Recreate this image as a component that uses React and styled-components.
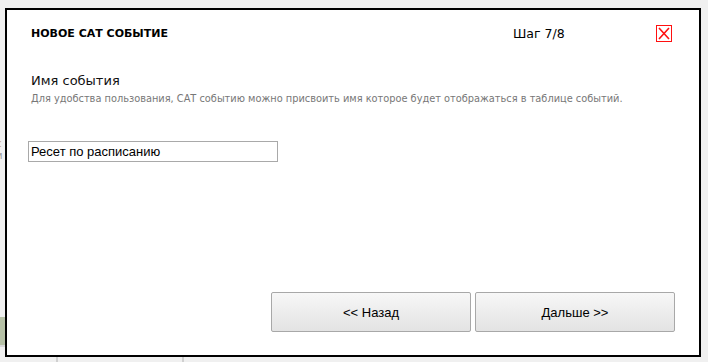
import styled, { createGlobalStyle } from "styled-components";

const GlobalStyle = createGlobalStyle`
  html, body {
    margin: 0;
    padding: 0;
    background: #f0f0f0;
  }
  * {
    box-sizing: border-box;
  }
`;

const Page = styled.div`
  position: relative;
  width: 708px;
  height: 362px;
  overflow: hidden;
  background: #f0f0f0;
`;

const Backdrop = styled.div`
  display: flex;
  flex-direction: column;
  padding-top: 138px;
`;

const BackText = styled.div`
  font-family: "DejaVu Sans", Verdana, sans-serif;
  font-size: 10px;
  line-height: 12px;
  color: ${(p) => p.color};
  margin-left: -4px;
`;

const GreenBar = styled.div`
  margin-top: 155px;
  height: 30px;
  width: 60px;
  background: #b6c1a6;
  border-bottom: 2px solid #d8d8d8;
`;

const TableRow = styled.div`
  display: flex;
  height: 20px;
  margin-top: 9px;
`;

const TableCell = styled.div`
  width: ${(p) => p.width}px;
  border-right: 2px solid #d0d0d0;
`;

const Dialog = styled.div`
  position: absolute;
  left: 5px;
  top: 8px;
  width: 696px;
  height: 349px;
  background: #fff;
  border: 2px solid #000;
  padding: 15px 24px 23px 24px;
  display: flex;
  flex-direction: column;
  font-family: "DejaVu Sans", Verdana, sans-serif;
`;

const Header = styled.div`
  display: flex;
  align-items: center;
  height: 17px;
`;

const Title = styled.div`
  font-size: 11px;
  font-weight: bold;
  color: #000;
  flex: 1;
`;

const Step = styled.div`
  font-size: 12.5px;
  color: #000;
  width: 143px;
`;

const CloseButton = styled.div`
  width: 16px;
  height: 17px;
  margin-right: 3px;
  border: 1px solid #ff1010;
  display: flex;
  align-items: center;
  justify-content: center;
  cursor: pointer;
`;

const FieldLabel = styled.div`
  margin-top: 31px;
  font-size: 13px;
  line-height: 16px;
  color: #111;
`;

const Hint = styled.div`
  margin-top: 3px;
  font-size: 9.8px;
  line-height: 13px;
  color: #777;
`;

const NameInput = styled.input`
  margin-top: 36px;
  margin-left: -3px;
  width: 250px;
  height: 21px;
  border: 1px solid #a9a9a9;
  padding: 0 2px;
  font-family: "Liberation Sans", Arial, sans-serif;
  font-size: 13px;
  color: #000;
  outline: none;
`;

const Footer = styled.div`
  margin-top: auto;
  display: flex;
  justify-content: flex-end;
  gap: 4px;
`;

const NavButton = styled.button`
  width: 200px;
  height: 40px;
  border: 1px solid #a8a8a8;
  border-radius: 2px;
  background: linear-gradient(#f7f7f7, #e3e3e3);
  font-family: "Liberation Sans", Arial, sans-serif;
  font-size: 13px;
  color: #000;
  cursor: pointer;
`;

function CloseIcon() {
  return (
    <svg width="12" height="13" viewBox="0 0 12 13">
      <path d="M1 1 L11 12 M11 1 L1 12" stroke="#ff1010" strokeWidth="1.6" fill="none" />
    </svg>
  );
}

export default function App() {
  return (
    <Page>
      <GlobalStyle />
      <Backdrop>
        <BackText color="#c9a27a">с</BackText>
        <BackText color="#999">и</BackText>
        <GreenBar />
        <TableRow>
          <TableCell width={58} />
          <TableCell width={126} />
        </TableRow>
      </Backdrop>
      <Dialog>
        <Header>
          <Title>НОВОЕ САТ СОБЫТИЕ</Title>
          <Step>Шаг 7/8</Step>
          <CloseButton>
            <CloseIcon />
          </CloseButton>
        </Header>
        <FieldLabel>Имя события</FieldLabel>
        <Hint>
          Для удобства пользования, САТ событию можно присвоить имя которое будет отображаться в таблице событий.
        </Hint>
        <NameInput defaultValue="Ресет по расписанию" />
        <Footer>
          <NavButton>&lt;&lt; Назад</NavButton>
          <NavButton>Дальше &gt;&gt;</NavButton>
        </Footer>
      </Dialog>
    </Page>
  );
}
